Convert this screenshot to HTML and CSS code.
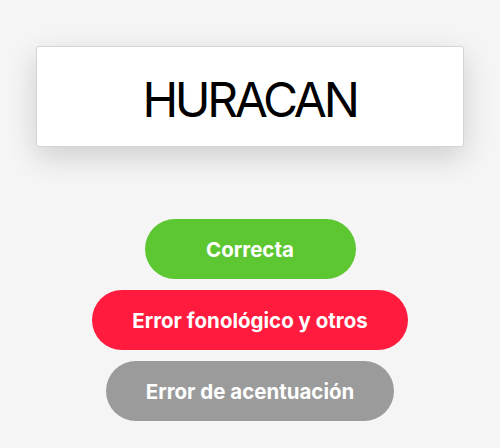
FILE: index.html
```html
<!DOCTYPE html>
<html lang="es">
<head>
<meta charset="utf-8">
<link rel="stylesheet" href="styles.css">
</head>
<body>
<main class="screen">
  <section class="card">
    <h1 class="word">HURACAN</h1>
  </section>
  <div class="actions">
    <button class="btn btn-green">Correcta</button>
    <button class="btn btn-red">Error fonológico y otros</button>
    <button class="btn btn-gray">Error de acentuación</button>
  </div>
</main>
</body>
</html>
```
FILE: styles.css
```css
html, body {
  margin: 0;
  padding: 0;
  background: #f5f5f5;
}
.screen {
  width: 500px;
  height: 448px;
  box-sizing: border-box;
  padding-top: 46px;
  display: flex;
  flex-direction: column;
  align-items: center;
}
.card {
  width: 428px;
  height: 101px;
  box-sizing: border-box;
  margin-left: -1px;
  background: #fff;
  border: 1px solid #d4d4d4;
  border-radius: 3px;
  box-shadow: 0 10px 30px rgba(0,0,0,0.16);
  display: flex;
  align-items: center;
  justify-content: center;
}
.word {
  margin: 0;
  padding-top: 6px;
  font-family: Inter, "Liberation Sans", sans-serif;
  font-weight: 400;
  font-size: 48px;
  letter-spacing: -3.3px;
  color: #000;
  line-height: 1;
}
.actions {
  margin-top: 72px;
  display: flex;
  flex-direction: column;
  align-items: center;
  gap: 11px;
}
.btn {
  height: 60px;
  min-width: 211px;
  padding: 0 40px;
  border: none;
  border-radius: 30px;
  color: #fff;
  font-family: Inter, "Liberation Sans", sans-serif;
  font-weight: 700;
  font-size: 20.5px;
  display: flex;
  align-items: center;
  justify-content: center;
}
.btn-green { background: #5dc732; }
.btn-red { background: #ff1b3d; }
.btn-gray { background: #9b9b9b; }
```
